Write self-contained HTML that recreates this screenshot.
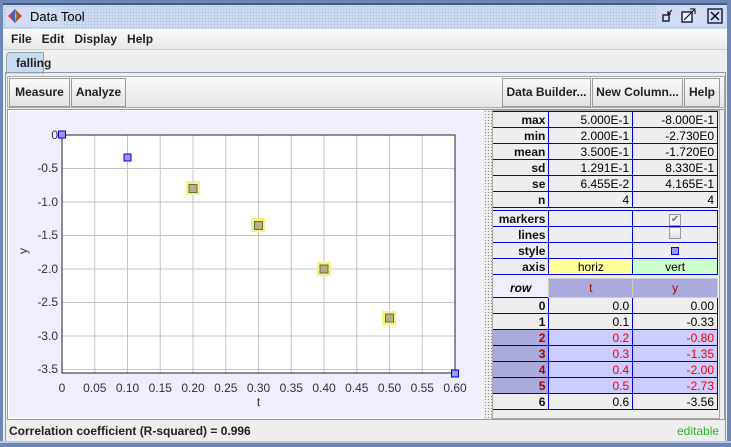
<!DOCTYPE html>
<html><head><meta charset="utf-8"><style>
*{margin:0;padding:0;box-sizing:border-box}
body{width:731px;height:447px;overflow:hidden;background:#6d87b8;font-family:"Liberation Sans",Arial,sans-serif;font-size:12px;position:relative}
.a{position:absolute}
.btn{position:absolute;top:78px;height:29px;border:1px solid #9a9a9a;background:linear-gradient(#fafafa,#e2e2e2);font-weight:bold;font-size:12px;line-height:27px;text-align:center;color:#222}
table{border-collapse:collapse;position:absolute;font-size:12px}
td{height:16px;border:1px solid #0000dd;padding:0 3px;text-align:right;line-height:14px}
td.l{background:#eeeeee;font-weight:bold;border-left:none;color:#111}
</style></head><body>
<!-- title bar -->
<div class="a" style="left:3px;top:3px;width:724px;height:26px;background:#cfdcf2;background-image:radial-gradient(#b6c6e2 0.8px,transparent 0.9px);background-size:3px 3px;border-top:2px solid #475c84"></div>
<div class="a" style="left:6px;top:7px;width:56px;height:20px;background:#cfdcf2"></div>
<svg class="a" style="left:7px;top:8px" width="16" height="16"><polygon points="8,1 15,8 8,15 1,8" fill="#e33"/><polygon points="8,1 8,15 4,8" fill="#36c"/><polygon points="8,1 11,8 8,15" fill="#3a3"/><polygon points="8,1 9,8 8,15" fill="#fc0"/></svg>
<div class="a" style="left:30px;top:9px;font-size:13px;color:#000">Data Tool</div>
<div class="a" style="left:656px;top:6px;width:70px;height:20px;background:#cfdcf2"></div>
<svg class="a" style="left:660px;top:7px" width="66" height="18">
<rect x="3" y="8" width="6" height="6" fill="#dde" stroke="#224" stroke-width="1.5"/><path d="M12 3 L8 7 M8 4 V7 H11" stroke="#000" fill="none"/>
<rect x="22" y="5" width="10" height="10" fill="#eef" stroke="#224" stroke-width="1.5"/><path d="M24 13 L30 7 M30 2 L35 2 L35 7 M35 2 L30 7" stroke="#000" fill="none"/>
<rect x="48" y="2" width="14" height="14" fill="#cfdcf2" stroke="#224" stroke-width="1.5"/><path d="M51 5 L59 13 M59 5 L51 13" stroke="#000" stroke-width="1.3"/>
</svg>
<!-- body -->
<div class="a" style="left:3px;top:29px;width:724px;height:416px;background:#eeeeee"></div>
<div class="a" style="left:3px;top:29px;width:724px;height:21px;background:linear-gradient(#fbfbfb,#e8e8e8);border-bottom:1px solid #ccc"></div>
<div class="a" style="left:11px;top:32px;font-size:12px;font-weight:bold;color:#222;word-spacing:0">File&nbsp;&nbsp; Edit&nbsp;&nbsp; Display&nbsp;&nbsp; Help</div>
<div class="a" style="left:6px;top:52px;width:38px;height:22px;background:#c8daf0;border:1px solid #8aa;border-bottom:none;border-radius:4px 0 0 0"></div>
<div class="a" style="left:16px;top:56px;font-weight:bold;color:#222">falling</div>
<div class="a" style="left:5px;top:72px;width:721px;height:374px;border:1px solid #8a9ab0;border-bottom:none"></div>
<div class="a" style="left:7px;top:76px;width:718px;height:32px;background:linear-gradient(#fafafa,#e6e6e6);border:1px solid #aaa"></div>
<div class="btn" style="left:9px;width:61px">Measure</div>
<div class="btn" style="left:71px;width:55px">Analyze</div>
<div class="btn" style="left:502px;width:89px">Data Builder...</div>
<div class="btn" style="left:592px;width:91px">New Column...</div>
<div class="btn" style="left:684px;width:36px">Help</div>
<!-- plot -->
<div class="a" style="left:7px;top:109px;width:718px;height:311px;border:1px solid #8a9ab0;background:#eeeeee"></div>
<div class="a" style="left:8px;top:110px;width:475px;height:309px;background:#eeeeff;border:1px solid #fff"></div>
<div class="a" style="left:484px;top:110px;width:8px;height:309px;background-image:radial-gradient(#888 0.6px,transparent 0.8px);background-size:3px 3px;background-position:3px 0"></div>
<svg class="a" style="left:0;top:0" width="490" height="420" font-family="Liberation Sans,Arial,sans-serif" font-size="12" fill="#333">
<rect x="62" y="135" width="393" height="238" fill="#fff"/>
<g stroke="#c4c4c4">
<line x1="94.75" y1="135" x2="94.75" y2="373"/><line x1="127.5" y1="135" x2="127.5" y2="373"/><line x1="160.25" y1="135" x2="160.25" y2="373"/><line x1="193" y1="135" x2="193" y2="373"/><line x1="225.75" y1="135" x2="225.75" y2="373"/><line x1="258.5" y1="135" x2="258.5" y2="373"/><line x1="291.25" y1="135" x2="291.25" y2="373"/><line x1="324" y1="135" x2="324" y2="373"/><line x1="356.75" y1="135" x2="356.75" y2="373"/><line x1="389.5" y1="135" x2="389.5" y2="373"/><line x1="422.25" y1="135" x2="422.25" y2="373"/>
<line x1="62" y1="168.5" x2="455" y2="168.5"/><line x1="62" y1="202" x2="455" y2="202"/><line x1="62" y1="235.5" x2="455" y2="235.5"/><line x1="62" y1="269" x2="455" y2="269"/><line x1="62" y1="302.5" x2="455" y2="302.5"/><line x1="62" y1="336" x2="455" y2="336"/><line x1="62" y1="369.5" x2="455" y2="369.5"/>
</g>
<rect x="62" y="135" width="393" height="238" fill="none" stroke="#222"/>
<g text-anchor="end">
<text x="58" y="139">0</text><text x="58" y="172">-0.5</text><text x="58" y="206">-1.0</text><text x="58" y="239">-1.5</text><text x="58" y="273">-2.0</text><text x="58" y="306">-2.5</text><text x="58" y="340">-3.0</text><text x="58" y="373">-3.5</text>
</g>
<g text-anchor="middle">
<text x="62" y="392">0</text><text x="94.75" y="392">0.05</text><text x="127.5" y="392">0.10</text><text x="160.25" y="392">0.15</text><text x="193" y="392">0.20</text><text x="225.75" y="392">0.25</text><text x="258.5" y="392">0.30</text><text x="291.25" y="392">0.35</text><text x="324" y="392">0.40</text><text x="356.75" y="392">0.45</text><text x="389.5" y="392">0.50</text><text x="422.25" y="392">0.55</text><text x="455" y="392">0.60</text>
<text x="258.5" y="406">t</text>
</g>
<text x="30" y="254" transform="rotate(-90 27 254)" text-anchor="middle">y</text>
<g fill="#f6f27a"><rect x="186" y="181" width="14" height="14"/><rect x="251" y="218" width="14" height="14"/><rect x="317" y="262" width="14" height="14"/><rect x="382" y="311" width="14" height="14"/></g>
<g fill="#b6b080" stroke="#666"><rect x="189" y="184.5" width="8" height="8"/><rect x="254.5" y="221.5" width="8" height="8"/><rect x="320" y="265" width="8" height="8"/><rect x="385.5" y="314" width="8" height="8"/></g>
<g fill="#9a9af0" stroke="#0000ee"><rect x="58.5" y="131" width="7" height="7"/><rect x="124" y="154" width="7" height="7"/><rect x="451.5" y="370" width="7" height="7"/></g>
</svg>
<!-- tables -->
<div class="a" style="left:492px;top:110px;width:228px;height:309px;border:1px solid #aaa;background:#eeeeee"></div>
<table style="left:493px;top:111px;width:225px">
<col style="width:56px"><col style="width:84px"><col style="width:85px">
<tr><td class="l">max</td><td>5.000E-1</td><td>-8.000E-1</td></tr>
<tr><td class="l">min</td><td>2.000E-1</td><td>-2.730E0</td></tr>
<tr><td class="l">mean</td><td>3.500E-1</td><td>-1.720E0</td></tr>
<tr><td class="l">sd</td><td>1.291E-1</td><td>8.330E-1</td></tr>
<tr><td class="l">se</td><td>6.455E-2</td><td>4.165E-1</td></tr>
<tr><td class="l">n</td><td>4</td><td>4</td></tr>
</table>
<table style="left:493px;top:210px;width:225px">
<col style="width:56px"><col style="width:84px"><col style="width:85px">
<tr><td class="l">markers</td><td></td><td style="text-align:center"><span style="display:inline-block;width:12px;height:12px;border:1px solid #999;background:#f4f4f4;font-size:10px;line-height:10px;color:#777">✔</span></td></tr>
<tr><td class="l">lines</td><td></td><td style="text-align:center"><span style="display:inline-block;width:12px;height:12px;border:1px solid #999;background:linear-gradient(#fff,#dde)"></span></td></tr>
<tr><td class="l">style</td><td></td><td style="text-align:center"><span style="display:inline-block;width:8px;height:8px;border:1px solid #00e;background:#9a9af0"></span></td></tr>
<tr><td class="l">axis</td><td style="background:#ffff99;text-align:center">horiz</td><td style="background:#ccffcc;text-align:center">vert</td></tr>
</table>
<table style="left:493px;top:278px;width:225px">
<col style="width:56px"><col style="width:84px"><col style="width:85px">
<tr><td style="height:19px;background:#eeeeff;font-weight:bold;font-style:italic;text-align:center;border:none;border-right:1px solid #ccc">row</td><td style="height:19px;background:#aaaadd;color:#a00;text-align:center;border-color:#ccc">t</td><td style="background:#aaaadd;color:#a00;text-align:center;border-color:#ccc">y</td></tr>
<tr><td class="l">0</td><td>0.0</td><td>0.00</td></tr>
<tr><td class="l">1</td><td>0.1</td><td>-0.33</td></tr>
<tr style="color:#e00"><td class="l" style="background:#aaaadd;color:#a00">2</td><td style="background:#ccccff">0.2</td><td style="background:#ccccff">-0.80</td></tr>
<tr style="color:#e00"><td class="l" style="background:#aaaadd;color:#a00">3</td><td style="background:#ccccff">0.3</td><td style="background:#ccccff">-1.35</td></tr>
<tr style="color:#e00"><td class="l" style="background:#aaaadd;color:#a00">4</td><td style="background:#ccccff">0.4</td><td style="background:#ccccff">-2.00</td></tr>
<tr style="color:#e00"><td class="l" style="background:#aaaadd;color:#a00">5</td><td style="background:#ccccff">0.5</td><td style="background:#ccccff">-2.73</td></tr>
<tr><td class="l">6</td><td>0.6</td><td>-3.56</td></tr>
</table>
<!-- status -->
<div class="a" style="left:9px;top:424px;font-weight:bold;color:#222">Correlation coefficient (R-squared) = 0.996</div>
<div class="a" style="left:677px;top:424px;color:#22bb22">editable</div>
<div class="a" style="left:0;top:441px;width:731px;height:6px;background:#6d87b8;border-top:2px solid #b8c8e4"></div>
</body></html>
